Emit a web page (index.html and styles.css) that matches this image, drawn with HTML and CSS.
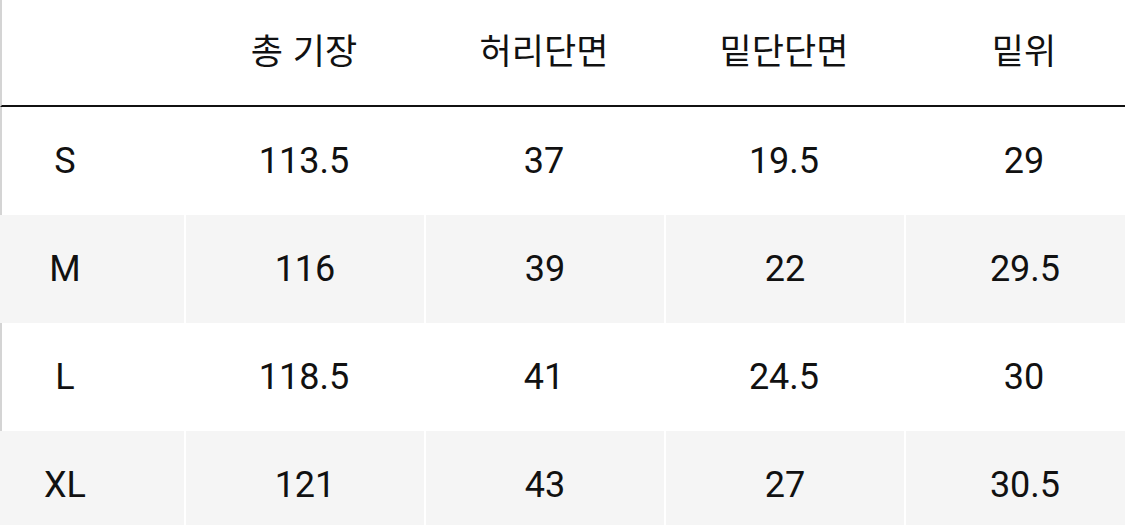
FILE: index.html
```html
<!DOCTYPE html>
<html lang="ko">
<head>
<meta charset="utf-8">
<title>Size table</title>
<link rel="stylesheet" href="styles.css">
</head>
<body>
<div class="table">
  <div class="row head">
    <div class="cell"></div>
    <div class="cell">총 기장</div>
    <div class="cell">허리단면</div>
    <div class="cell">밑단단면</div>
    <div class="cell">밑위</div>
  </div>
  <div class="row">
    <div class="cell">S</div>
    <div class="cell">113.5</div>
    <div class="cell">37</div>
    <div class="cell">19.5</div>
    <div class="cell">29</div>
  </div>
  <div class="row alt">
    <div class="cell">M</div>
    <div class="cell">116</div>
    <div class="cell">39</div>
    <div class="cell">22</div>
    <div class="cell">29.5</div>
  </div>
  <div class="row">
    <div class="cell">L</div>
    <div class="cell">118.5</div>
    <div class="cell">41</div>
    <div class="cell">24.5</div>
    <div class="cell">30</div>
  </div>
  <div class="row alt">
    <div class="cell">XL</div>
    <div class="cell">121</div>
    <div class="cell">43</div>
    <div class="cell">27</div>
    <div class="cell">30.5</div>
  </div>
</div>
</body>
</html>
```

FILE: styles.css
```css
html, body {
  margin: 0;
  padding: 0;
  background: #ffffff;
  overflow: hidden;
}

body {
  width: 1125px;
  height: 525px;
  font-family: Roboto, "Noto Sans CJK KR", sans-serif;
  font-size: 36px;
  color: #111111;
}

.table {
  width: 1144px;
  display: flex;
  flex-direction: column;
}

.row {
  display: grid;
  grid-template-columns: 182px repeat(4, 240px);
  height: 108px;
  border-left: 2px solid #d4d4d4;
}

.row.head {
  height: 105px;
  border-bottom: 2px solid #111111;
}

.row.head .cell {
  padding-bottom: 9px;
  font-family: "Noto Sans CJK KR", sans-serif;
  font-size: 35px;
}

.row.alt {
  border-left: 2px solid #f5f5f5;
  background: #ffffff;
}

.cell {
  display: flex;
  align-items: center;
  justify-content: center;
  box-sizing: border-box;
}

.cell:first-child {
  padding-right: 56px;
}

.row.alt .cell {
  background: #f5f5f5;
}

.row.alt .cell + .cell {
  border-left: 2px solid #ffffff;
}
```
